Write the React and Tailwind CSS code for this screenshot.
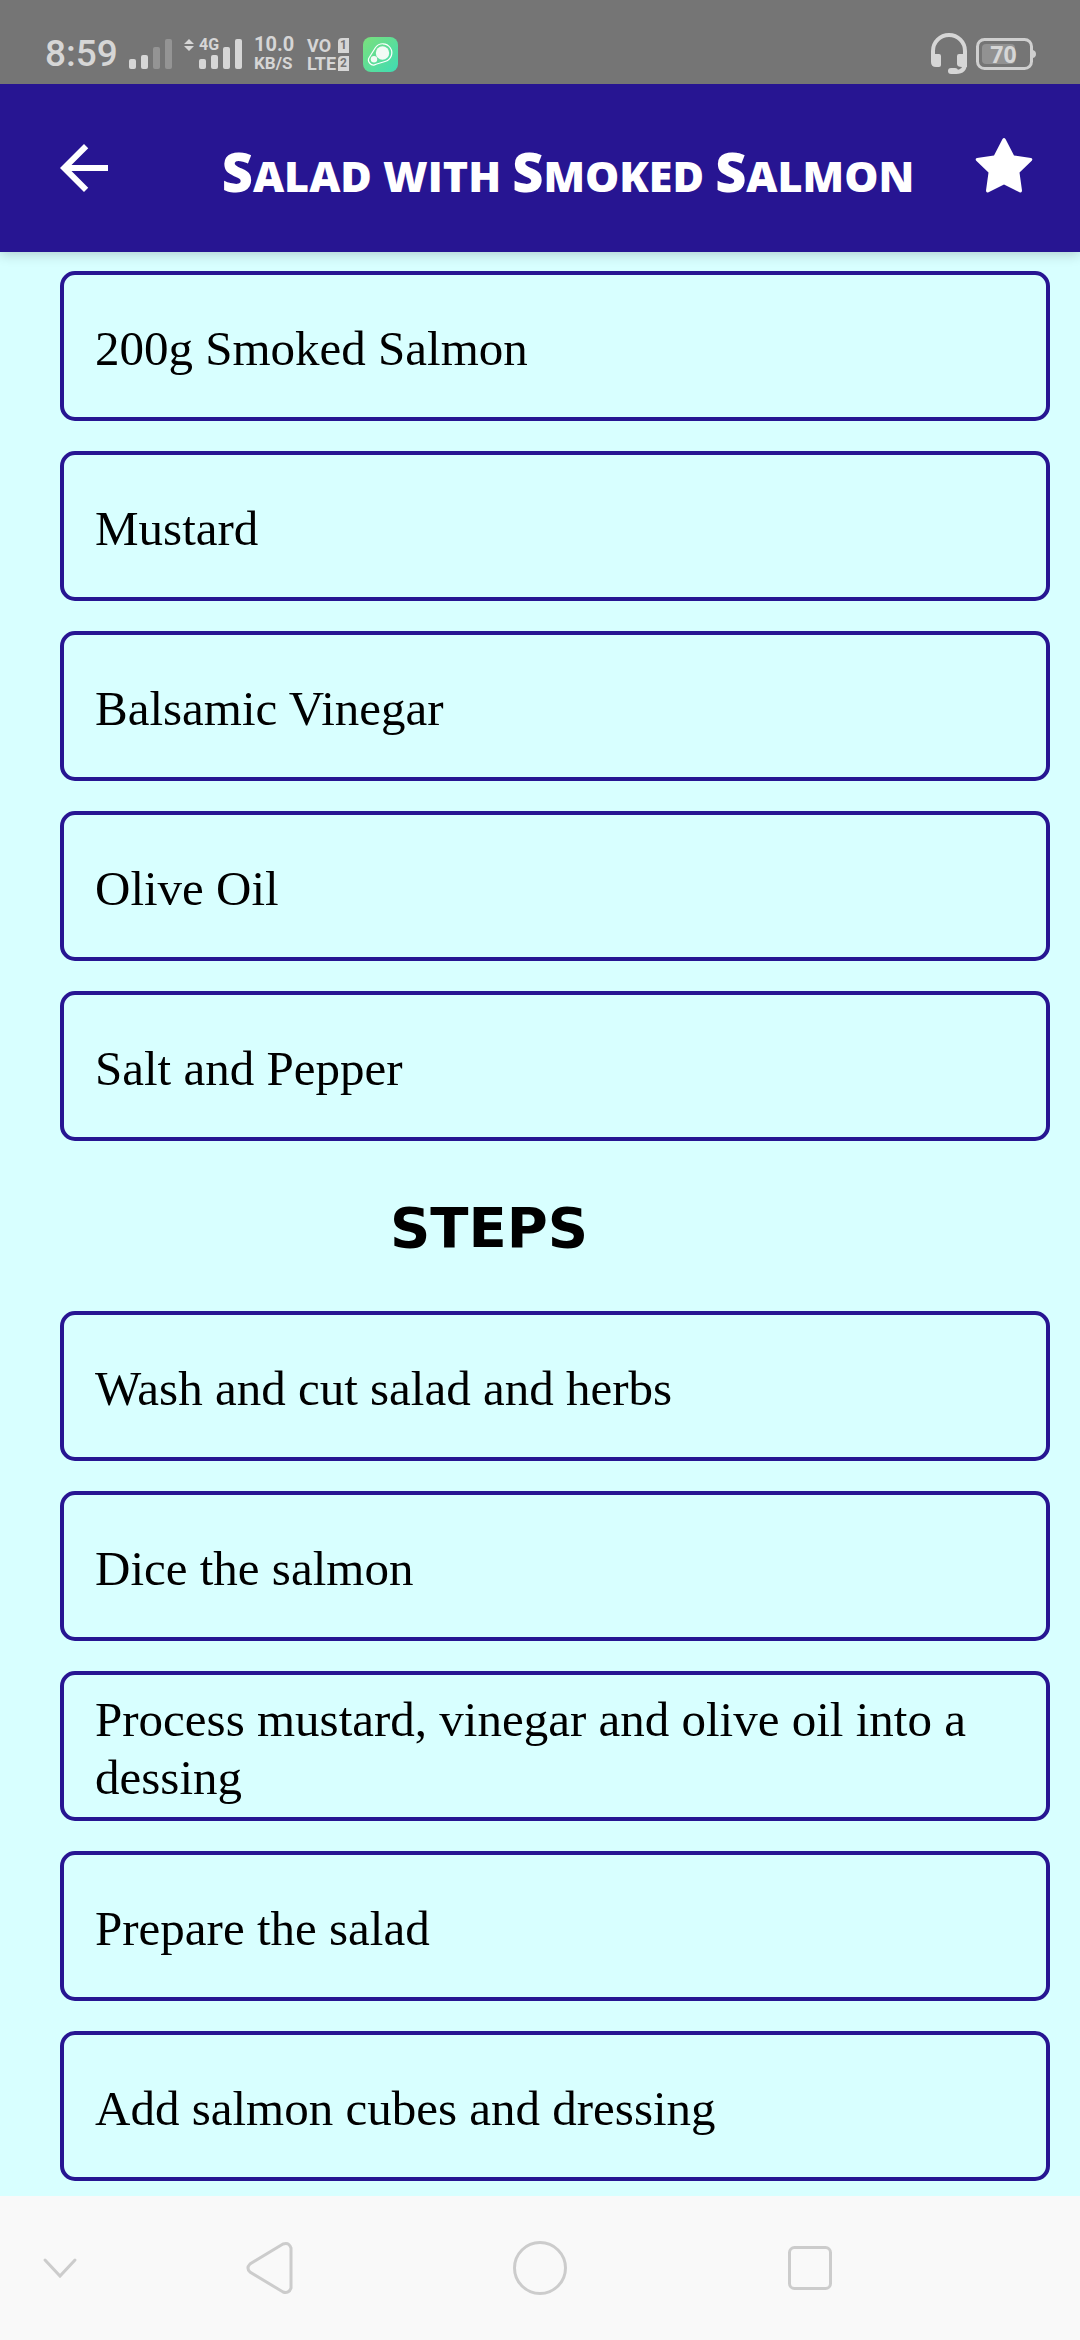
const ingredients = [
  "200g Smoked Salmon",
  "Mustard",
  "Balsamic Vinegar",
  "Olive Oil",
  "Salt and Pepper",
];

const steps = [
  "Wash and cut salad and herbs",
  "Dice the salmon",
  "Process mustard, vinegar and olive oil into a dessing",
  "Prepare the salad",
  "Add salmon cubes and dressing",
];

function SignalBars({ weak, label }) {
  const dim = weak ? "#949494" : "#d6d6d6";
  return (
    <svg width="44" height="32" viewBox="0 0 44 32" role="img" aria-label={label}>
      <rect x="0" y="21" width="7" height="10" rx="2" fill="#d6d6d6" />
      <rect x="12" y="17" width="7" height="14" rx="2" fill="#d6d6d6" />
      <rect x="24" y="9" width="7" height="22" rx="2" fill={dim} />
      <rect x="36" y="1" width="7" height="30" rx="2" fill={dim} />
    </svg>
  );
}

function SimBadge({ children }) {
  return (
    <span className="h-[15px] w-[11px] rounded-tl-sm bg-[#d6d6d6] text-center text-[12px] leading-[15px] text-[#757575]">
      {children}
    </span>
  );
}

function StatusBar() {
  return (
    <div className="relative z-20 flex h-[84px] items-end justify-between bg-[#757575] pr-[44px] pb-[8px] pl-[45px] font-['Roboto',sans-serif] text-[#d6d6d6]">
      <div className="flex h-[44px] items-center">
        <span className="w-[84px] text-[37px] leading-[44px] font-medium">8:59</span>
        <SignalBars weak label="Signal, SIM 1" />
        <svg className="ml-[11px]" width="10" height="32" viewBox="0 0 10 32" fill="#d6d6d6" aria-hidden="true">
          <path d="M5 1l5 5H0zM5 13l5-5H0z" />
        </svg>
        <div className="relative ml-[5px]">
          <SignalBars label="Signal, SIM 2" />
          <span className="absolute top-0 left-0 text-[16px] leading-[14px] font-bold">4G</span>
        </div>
        <div className="ml-[11px] flex w-[42px] flex-col font-bold">
          <span className="text-[20px] leading-[19px]">10.0</span>
          <span className="text-[17px] leading-[19px]">KB/S</span>
        </div>
        <div className="ml-[11px] flex w-[42px] flex-col gap-px font-bold">
          <div className="flex items-center justify-between">
            <span className="text-[18px] leading-[17px]">VO</span>
            <SimBadge>1</SimBadge>
          </div>
          <div className="flex items-center justify-between">
            <span className="text-[18px] leading-[17px]">LTE</span>
            <SimBadge>2</SimBadge>
          </div>
        </div>
        <svg className="ml-[14px]" width="35" height="35" viewBox="0 0 35 35" role="img" aria-label="Assistant">
          <defs>
            <linearGradient id="tile" x1="0" y1="0" x2="1" y2="1">
              <stop offset="0" stopColor="#7be07c" />
              <stop offset="1" stopColor="#3fdcb4" />
            </linearGradient>
          </defs>
          <rect width="35" height="35" rx="8" fill="url(#tile)" />
          <path d="M12.500 10.500A9 9 0 1 1 22 24.500L13 27.300A5 5 0 0 1 6.500 20z" fill="none" stroke="#fff" strokeWidth="1.200" strokeLinejoin="round" />
          <circle cx="19.500" cy="16" r="6.700" fill="#f2fbf5" />
          <circle cx="11" cy="22.300" r="3.200" fill="#f2fbf5" />
        </svg>
      </div>
      <div className="flex h-[44px] items-center gap-[9px]">
        <svg width="36" height="42" viewBox="0 0 36 42" role="img" aria-label="Headset">
          <path d="M2 22V18a16 16 0 0 1 32 0v12q0 9-9 9h-4" fill="none" stroke="#d6d6d6" strokeWidth="4" />
          <path d="M0 21h8q2 0 2 2v9q0 2-2 2H5q-5 0-5-5zM28 21h8v13h-5q-5 0-5-3v-8q0-2 2-2z" fill="#d6d6d6" />
          <rect x="17" y="35" width="10" height="6" rx="3" fill="#d6d6d6" />
        </svg>
        <div className="relative">
          <svg width="60" height="32" viewBox="0 0 60 32" aria-hidden="true">
            <rect x="1.500" y="1.500" width="54" height="29" rx="7" fill="none" stroke="#cfcfcf" strokeWidth="3" />
            <rect x="6" y="6" width="33" height="20" rx="4" fill="#929292" />
            <path d="M57 12q3 1 3 4t-3 4z" fill="#cfcfcf" />
          </svg>
          <span className="absolute inset-y-0 left-0 w-[55px] text-center font-['Open_Sans',sans-serif] text-[23px] leading-[32px] font-bold">70</span>
        </div>
      </div>
    </div>
  );
}

function Header() {
  return (
    <header className="relative z-10 flex h-[168px] items-center justify-between bg-[#271592] pr-[40px] pl-[48px] text-white shadow-[0_2px_12px_rgba(0,0,0,0.2)]">
      <button type="button" aria-label="Back" className="size-[72px]">
        <svg viewBox="0 0 24 24" fill="currentColor" aria-hidden="true">
          <path d="M20 11H7.830l5.590-5.590L12 4l-8 8 8 8 1.410-1.410L7.830 13H20v-2z" />
        </svg>
      </button>
      <h1 className="pt-[10px] pl-[48px] font-['Open_Sans',sans-serif] text-[43px] leading-[64px] font-extrabold uppercase">
        <span className="text-[54px]">S</span>alad with <span className="text-[54px]">S</span>moked{" "}
        <span className="text-[54px]">S</span>almon
      </h1>
      <button type="button" aria-label="Favourite" className="size-[72px]">
        <svg viewBox="0 0 72 72" fill="currentColor" aria-hidden="true">
          <path d="M34.500 7q1.500-2 3 0l8.500 16.500 17 2.500q2 .5 1 2.500L51.500 40.500 54 58.500q0 2.500-2 2L36 52.500 20 60.500q-2 .5-2-2L20.500 40.500 8 28.500q-1-2 1-2.500l17-2.500z" />
        </svg>
      </button>
    </header>
  );
}

function CardList({ items }) {
  return (
    <ul className="flex flex-col gap-[30px]">
      {items.map((item) => (
        <li
          key={item}
          className="flex min-h-[150px] items-center rounded-[15px] border-4 border-[#271592] px-[31px] pt-[6px] text-[49px] leading-[58px]"
        >
          {item}
        </li>
      ))}
    </ul>
  );
}

function NavBar() {
  return (
    <nav className="grid h-[144px] grid-cols-[120fr_300fr_240fr_300fr_120fr] place-items-center bg-[#f9f9f9] text-[#cccccc]">
      <button type="button" aria-label="Hide keyboard">
        <svg width="36" height="24" viewBox="0 0 36 24" fill="none" stroke="currentColor" strokeWidth="3" strokeLinecap="round">
          <path d="M3 4l15 16L33 4" />
        </svg>
      </button>
      <button type="button" aria-label="Back">
        <svg width="48" height="54" viewBox="0 0 48 54" fill="none" stroke="currentColor" strokeWidth="3">
          <path d="M37 3L4 23q-4 4 0 8l33 20q6 2 8-4V7q-2-6-8-4z" />
        </svg>
      </button>
      <button type="button" aria-label="Home">
        <svg width="54" height="54" viewBox="0 0 54 54" fill="none" stroke="currentColor" strokeWidth="3">
          <circle cx="27" cy="27" r="25.500" />
        </svg>
      </button>
      <button type="button" aria-label="Recent apps">
        <svg width="44" height="44" viewBox="0 0 44 44" fill="none" stroke="currentColor" strokeWidth="3">
          <rect x="1.500" y="1.500" width="41" height="41" rx="5" />
        </svg>
      </button>
    </nav>
  );
}

export default function App() {
  return (
    <div className="flex min-h-screen flex-col bg-[#d8ffff] text-black">
      <StatusBar />
      <Header />
      <main className="flex-1 pt-[19px] pr-[30px] pb-[15px] pl-[60px] font-['Liberation_Serif',serif]">
        <CardList items={ingredients} />
        <h2 className="pt-[55px] pr-[132px] pb-[51px] text-center font-['DejaVu_Sans',sans-serif] text-[56px] leading-[64px] font-bold">
          STEPS
        </h2>
        <CardList items={steps} />
      </main>
      <NavBar />
    </div>
  );
}
